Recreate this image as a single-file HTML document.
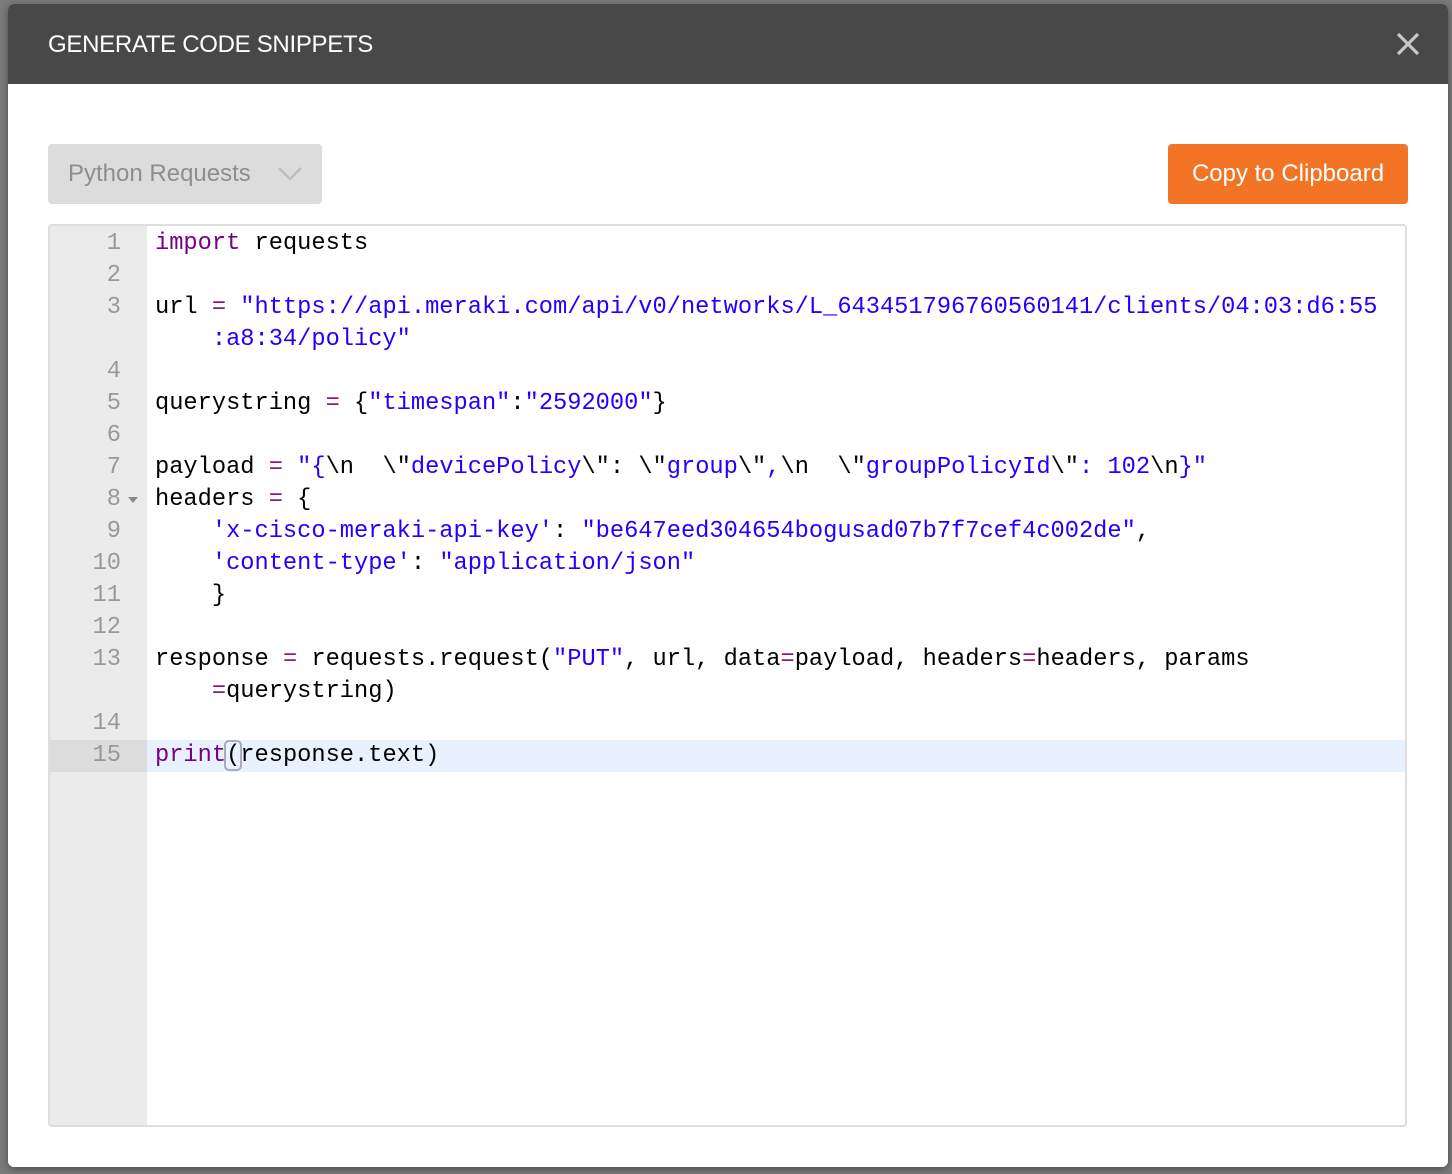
<!DOCTYPE html>
<html><head><meta charset="utf-8"><style>
html,body{margin:0;padding:0;width:1452px;height:1174px;overflow:hidden;background:#7b7b7b;font-family:"Liberation Sans",sans-serif}
.dlg{position:absolute;left:8px;top:4px;width:1440px;height:1163px;background:#fff;border-radius:6px;overflow:hidden;box-shadow:0 2px 8px rgba(0,0,0,.4)}
.hdr{position:absolute;left:0;top:0;width:100%;height:80px;background:#484848}
.ttl{position:absolute;left:40px;top:27px;color:#fff;font-size:24px;letter-spacing:-0.3px}
.x{position:absolute;right:28px;top:28px;width:24px;height:24px}
.sel{position:absolute;left:40px;top:140px;width:274px;height:60px;background:#dcdcdc;border-radius:4px;color:#8e8e8e;font-size:24px;line-height:60px;box-sizing:border-box;padding-left:20px}
.btn{position:absolute;left:1160px;top:140px;width:240px;height:60px;background:#f47425;border-radius:4px;color:#fff;font-size:24px;line-height:60px;text-align:center}
.ed{position:absolute;left:40px;top:220px;width:1359px;height:903px;border:2px solid #dedede;border-radius:4px;box-sizing:border-box;overflow:hidden}
.gut{position:absolute;left:0;top:0;width:97px;height:100%;background:#ebebeb}
.hl{position:absolute;left:0;top:514px;width:100%;height:32px;background:#e8f2fe}
.hlg{position:absolute;left:0;top:514px;width:97px;height:32px;background:#dcdcdc}
.ln,.cl{position:absolute;font-family:"Liberation Mono",monospace;font-size:23.7px;line-height:32px;white-space:pre;height:32px}
.ln{left:0;width:71px;text-align:right;color:#999}
.cl{left:105px;color:#000}
.k{color:#770088}.s{color:#2200ff}.o{color:#981a6a}
.cur{outline:2px solid #aab;border-radius:3px}
</style></head><body>
<div class="dlg">
<div class="hdr"><div class="ttl">GENERATE CODE SNIPPETS</div>
<svg class="x" viewBox="0 0 24 24"><path d="M2 2L22 22M22 2L2 22" stroke="#c8c8c8" stroke-width="3.2"/></svg></div>
<div class="sel">Python Requests<svg style="position:absolute;left:230px;top:22px" width="24" height="16" viewBox="0 0 24 16"><path d="M1 2L12 13L23 2" stroke="#bdbdbd" stroke-width="2.5" fill="none"/></svg></div>
<div class="btn">Copy to Clipboard</div>
<div class="ed">
<div class="gut"></div><div class="hl"></div><div class="hlg"></div>
<div class="ln" style="top:2px">1</div>
<div class="ln" style="top:34px">2</div>
<div class="ln" style="top:66px">3</div>
<div class="ln" style="top:130px">4</div>
<div class="ln" style="top:162px">5</div>
<div class="ln" style="top:194px">6</div>
<div class="ln" style="top:226px">7</div>
<div class="ln" style="top:258px">8</div>
<svg style="position:absolute;left:78px;top:271px" width="10" height="6"><path d="M0 0H10L5 6Z" fill="#888"/></svg>
<div class="ln" style="top:290px">9</div>
<div class="ln" style="top:322px">10</div>
<div class="ln" style="top:354px">11</div>
<div class="ln" style="top:386px">12</div>
<div class="ln" style="top:418px">13</div>
<div class="ln" style="top:482px">14</div>
<div class="ln" style="top:514px">15</div>
<div class="cl" style="top:2px"><span class="k">import</span> requests</div>
<div class="cl" style="top:66px">url <span class="o">=</span> <span class="s">"https://api.meraki.com/api/v0/networks/L_643451796760560141/clients/04:03:d6:55</span></div>
<div class="cl" style="top:98px"><span class="s">    :a8:34/policy"</span></div>
<div class="cl" style="top:162px">querystring <span class="o">=</span> {<span class="s">"timespan"</span>:<span class="s">"2592000"</span>}</div>
<div class="cl" style="top:226px">payload <span class="o">=</span> <span class="s">"{</span>\n  \"<span class="s">devicePolicy</span>\": \"<span class="s">group</span>\"<span class="s">,</span>\n  \"<span class="s">groupPolicyId</span>\"<span class="s">: 102</span>\n<span class="s">}"</span></div>
<div class="cl" style="top:258px">headers <span class="o">=</span> {</div>
<div class="cl" style="top:290px">    <span class="s">'x-cisco-meraki-api-key'</span>: <span class="s">"be647eed304654bogusad07b7f7cef4c002de"</span>,</div>
<div class="cl" style="top:322px">    <span class="s">'content-type'</span>: <span class="s">"application/json"</span></div>
<div class="cl" style="top:354px">    }</div>
<div class="cl" style="top:418px">response <span class="o">=</span> requests.request(<span class="s">"PUT"</span>, url, data<span class="o">=</span>payload, headers<span class="o">=</span>headers, params</div>
<div class="cl" style="top:450px">    <span class="o">=</span>querystring)</div>
<div class="cl" style="top:514px"><span class="k">print</span><span class="cur">(</span>response.text)</div>
</div>
</div>
</body></html>
